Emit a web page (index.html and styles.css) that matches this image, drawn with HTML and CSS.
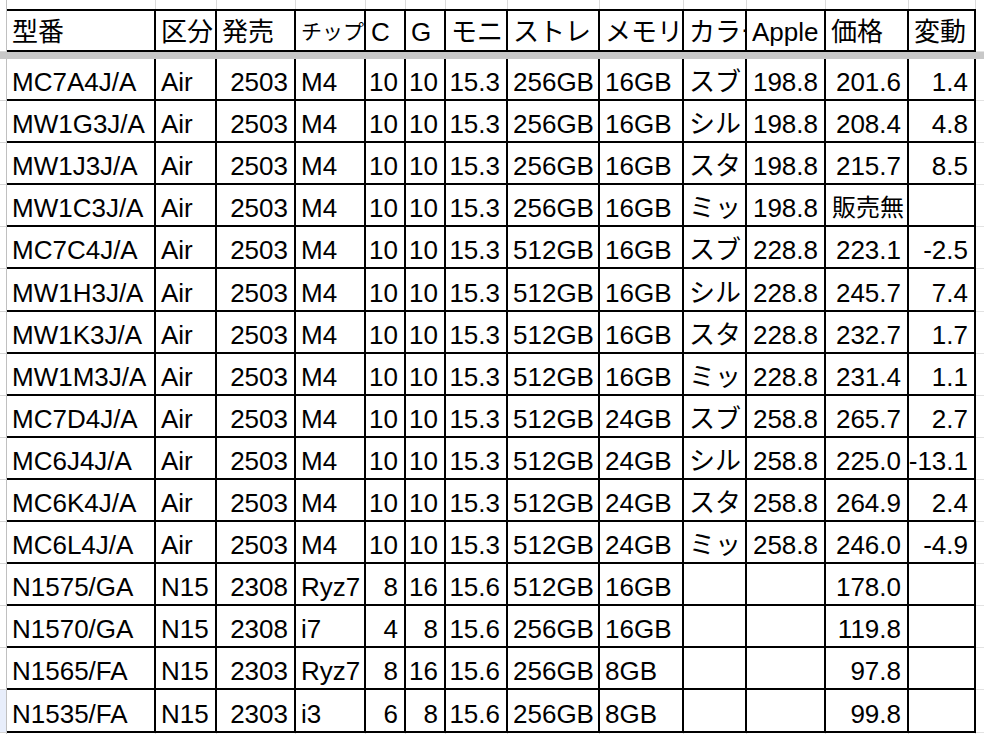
FILE: index.html
```html
<!DOCTYPE html>
<html lang="ja">
<head>
<meta charset="utf-8">
<title>MacBook Air 価格表</title>
<link rel="stylesheet" href="styles.css">
</head>
<body>
<div class="sheet">
  <div class="row ghost">
    <div class="c rh"></div><div class="c"></div><div class="c"></div><div class="c"></div><div class="c"></div><div class="c"></div><div class="c"></div><div class="c"></div><div class="c"></div><div class="c"></div><div class="c"></div><div class="c"></div><div class="c"></div><div class="c"></div><div class="c tail"></div>
  </div>
  <div class="row head">
    <div class="c rh"></div>
    <div class="c">型番</div><div class="c">区分</div><div class="c">発売</div><div class="c small">チップ</div><div class="c">C</div><div class="c">G</div><div class="c">モニ</div><div class="c">ストレ</div><div class="c">メモリ</div><div class="c clip">カラー</div><div class="c">Apple</div><div class="c">価格</div><div class="c">変動</div>
    <div class="c tail"></div>
  </div>
  <div class="band"></div>

  <div class="row"><div class="c rh"></div><div class="c">MC7A4J/A</div><div class="c">Air</div><div class="c n">2503</div><div class="c">M4</div><div class="c n">10</div><div class="c n">10</div><div class="c n">15.3</div><div class="c">256GB</div><div class="c">16GB</div><div class="c">スブ</div><div class="c n">198.8</div><div class="c n">201.6</div><div class="c n">1.4</div><div class="c tail"></div></div>
  <div class="row"><div class="c rh"></div><div class="c">MW1G3J/A</div><div class="c">Air</div><div class="c n">2503</div><div class="c">M4</div><div class="c n">10</div><div class="c n">10</div><div class="c n">15.3</div><div class="c">256GB</div><div class="c">16GB</div><div class="c">シル</div><div class="c n">198.8</div><div class="c n">208.4</div><div class="c n">4.8</div><div class="c tail"></div></div>
  <div class="row"><div class="c rh"></div><div class="c">MW1J3J/A</div><div class="c">Air</div><div class="c n">2503</div><div class="c">M4</div><div class="c n">10</div><div class="c n">10</div><div class="c n">15.3</div><div class="c">256GB</div><div class="c">16GB</div><div class="c">スタ</div><div class="c n">198.8</div><div class="c n">215.7</div><div class="c n">8.5</div><div class="c tail"></div></div>
  <div class="row"><div class="c rh"></div><div class="c">MW1C3J/A</div><div class="c">Air</div><div class="c n">2503</div><div class="c">M4</div><div class="c n">10</div><div class="c n">10</div><div class="c n">15.3</div><div class="c">256GB</div><div class="c">16GB</div><div class="c">ミッ</div><div class="c n">198.8</div><div class="c note">販売無</div><div class="c n"></div><div class="c tail"></div></div>
  <div class="row"><div class="c rh"></div><div class="c">MC7C4J/A</div><div class="c">Air</div><div class="c n">2503</div><div class="c">M4</div><div class="c n">10</div><div class="c n">10</div><div class="c n">15.3</div><div class="c">512GB</div><div class="c">16GB</div><div class="c">スブ</div><div class="c n">228.8</div><div class="c n">223.1</div><div class="c n">-2.5</div><div class="c tail"></div></div>
  <div class="row"><div class="c rh"></div><div class="c">MW1H3J/A</div><div class="c">Air</div><div class="c n">2503</div><div class="c">M4</div><div class="c n">10</div><div class="c n">10</div><div class="c n">15.3</div><div class="c">512GB</div><div class="c">16GB</div><div class="c">シル</div><div class="c n">228.8</div><div class="c n">245.7</div><div class="c n">7.4</div><div class="c tail"></div></div>
  <div class="row"><div class="c rh"></div><div class="c">MW1K3J/A</div><div class="c">Air</div><div class="c n">2503</div><div class="c">M4</div><div class="c n">10</div><div class="c n">10</div><div class="c n">15.3</div><div class="c">512GB</div><div class="c">16GB</div><div class="c">スタ</div><div class="c n">228.8</div><div class="c n">232.7</div><div class="c n">1.7</div><div class="c tail"></div></div>
  <div class="row"><div class="c rh"></div><div class="c">MW1M3J/A</div><div class="c">Air</div><div class="c n">2503</div><div class="c">M4</div><div class="c n">10</div><div class="c n">10</div><div class="c n">15.3</div><div class="c">512GB</div><div class="c">16GB</div><div class="c">ミッ</div><div class="c n">228.8</div><div class="c n">231.4</div><div class="c n">1.1</div><div class="c tail"></div></div>
  <div class="row"><div class="c rh"></div><div class="c">MC7D4J/A</div><div class="c">Air</div><div class="c n">2503</div><div class="c">M4</div><div class="c n">10</div><div class="c n">10</div><div class="c n">15.3</div><div class="c">512GB</div><div class="c">24GB</div><div class="c">スブ</div><div class="c n">258.8</div><div class="c n">265.7</div><div class="c n">2.7</div><div class="c tail"></div></div>
  <div class="row"><div class="c rh"></div><div class="c">MC6J4J/A</div><div class="c">Air</div><div class="c n">2503</div><div class="c">M4</div><div class="c n">10</div><div class="c n">10</div><div class="c n">15.3</div><div class="c">512GB</div><div class="c">24GB</div><div class="c">シル</div><div class="c n">258.8</div><div class="c n">225.0</div><div class="c n">-13.1</div><div class="c tail"></div></div>
  <div class="row"><div class="c rh"></div><div class="c">MC6K4J/A</div><div class="c">Air</div><div class="c n">2503</div><div class="c">M4</div><div class="c n">10</div><div class="c n">10</div><div class="c n">15.3</div><div class="c">512GB</div><div class="c">24GB</div><div class="c">スタ</div><div class="c n">258.8</div><div class="c n">264.9</div><div class="c n">2.4</div><div class="c tail"></div></div>
  <div class="row"><div class="c rh"></div><div class="c">MC6L4J/A</div><div class="c">Air</div><div class="c n">2503</div><div class="c">M4</div><div class="c n">10</div><div class="c n">10</div><div class="c n">15.3</div><div class="c">512GB</div><div class="c">24GB</div><div class="c">ミッ</div><div class="c n">258.8</div><div class="c n">246.0</div><div class="c n">-4.9</div><div class="c tail"></div></div>
  <div class="row"><div class="c rh"></div><div class="c">N1575/GA</div><div class="c">N15</div><div class="c n">2308</div><div class="c">Ryz7</div><div class="c n">8</div><div class="c n">16</div><div class="c n">15.6</div><div class="c">512GB</div><div class="c">16GB</div><div class="c"></div><div class="c n"></div><div class="c n">178.0</div><div class="c n"></div><div class="c tail"></div></div>
  <div class="row"><div class="c rh"></div><div class="c">N1570/GA</div><div class="c">N15</div><div class="c n">2308</div><div class="c">i7</div><div class="c n">4</div><div class="c n">8</div><div class="c n">15.6</div><div class="c">256GB</div><div class="c">16GB</div><div class="c"></div><div class="c n"></div><div class="c n">119.8</div><div class="c n"></div><div class="c tail"></div></div>
  <div class="row"><div class="c rh"></div><div class="c">N1565/FA</div><div class="c">N15</div><div class="c n">2303</div><div class="c">Ryz7</div><div class="c n">8</div><div class="c n">16</div><div class="c n">15.6</div><div class="c">256GB</div><div class="c">8GB</div><div class="c"></div><div class="c n"></div><div class="c n">97.8</div><div class="c n"></div><div class="c tail"></div></div>
  <div class="row"><div class="c rh sel"></div><div class="c">N1535/FA</div><div class="c">N15</div><div class="c n">2303</div><div class="c">i3</div><div class="c n">6</div><div class="c n">8</div><div class="c n">15.6</div><div class="c">256GB</div><div class="c">8GB</div><div class="c"></div><div class="c n"></div><div class="c n">99.8</div><div class="c n"></div><div class="c tail"></div></div>

  <div class="row ghost bottom">
    <div class="c rh"></div><div class="c"></div><div class="c"></div><div class="c"></div><div class="c"></div><div class="c"></div><div class="c"></div><div class="c"></div><div class="c"></div><div class="c"></div><div class="c"></div><div class="c"></div><div class="c"></div><div class="c"></div><div class="c tail"></div>
  </div>
</div>
</body>
</html>
```

FILE: styles.css
```css
html, body {
  margin: 0;
  padding: 0;
  background: #fff;
}

.sheet {
  width: 984px;
  height: 734px;
  overflow: hidden;
  font-family: "Liberation Sans", "Noto Sans CJK JP", sans-serif;
  color: #000;
}

.row {
  display: grid;
  grid-template-columns: 7px 149px 61px 79px 70px 40px 40px 62px 92px 84px 63px 79px 83px 67px 8px;
  height: 42.1px;
}

.c {
  box-sizing: border-box;
  display: flex;
  align-items: flex-end;
  justify-content: flex-start;
  padding: 0 6px 2px 5px;
  border-right: 2px solid #000;
  border-bottom: 2px solid #000;
  font-size: 26px;
  line-height: 30px;
  white-space: nowrap;
  overflow: hidden;
}

.c.n {
  justify-content: flex-end;
  padding-left: 0;
  overflow: visible;
}

.c.clip {
  padding-right: 0;
}

.c.rh {
  padding: 0;
  border-right: 1px solid #c0c0c0;
  border-bottom: 1px solid #d6d6d6;
  background: #fff;
}

.c.rh.sel {
  background: #e8eefb;
}

.c.tail {
  padding: 0;
  border-right: none;
  border-bottom: 1px solid #e2e2e2;
}

/* partially visible row above the header */
.row.ghost {
  height: 9px;
}

.row.ghost .c {
  border-right: 1px solid #dadada;
  border-bottom: none;
}

.row.ghost .c.rh {
  border-right: 1px solid #c0c0c0;
}

.row.ghost .c.tail {
  border-right: none;
}

.row.ghost.bottom {
  height: 10px;
}

/* frozen header row */
.row.head {
  height: 43px;
}

.row.head .c {
  border-top: 2px solid #000;
  padding-bottom: 3px;
}

.row.head .c.rh,
.row.head .c.tail {
  border-top: none;
}

.row.head .c.small {
  font-size: 21px;
  padding-left: 5px;
  padding-right: 0;
}

.band {
  height: 7px;
  background: #c8c8c8;
}

.c.note {
  font-size: 24px;
  padding-left: 6px;
  padding-right: 0;
}
```
